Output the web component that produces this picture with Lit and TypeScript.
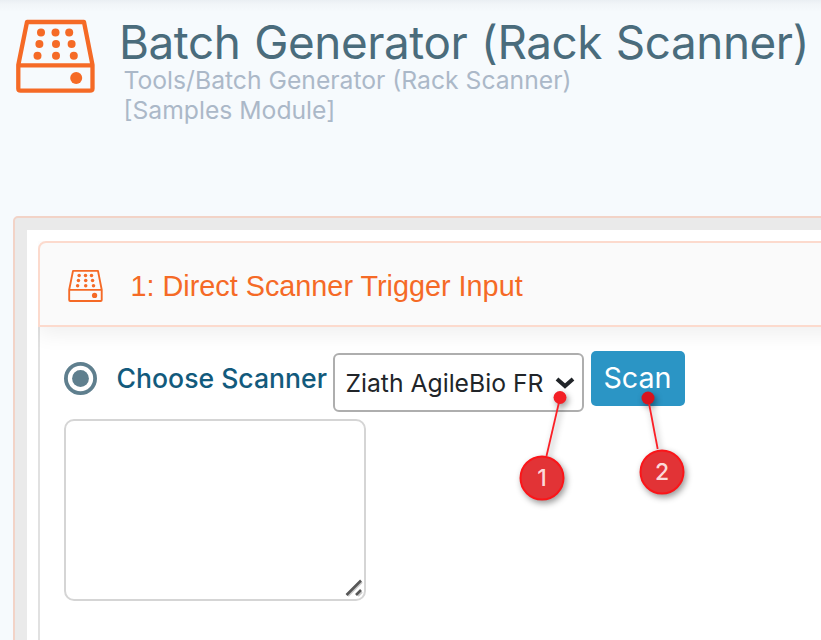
import { LitElement, html, css, svg } from "lit";
import { customElement } from "lit/decorators.js";

@customElement("rack-icon")
class RackIcon extends LitElement {
  static styles = css`
    :host { display: block; color: #f56a26; }
    svg { display: block; width: 100%; height: 100%; overflow: visible; }
  `;
  render() {
    const dots = [
      [25, 12.5], [39.5, 12.5], [53.2, 12.5],
      [23.4, 24], [40, 24], [55.6, 24],
      [21.5, 35.7], [40, 35.7], [57.8, 35.7],
    ];
    return html`<svg viewBox="0 0 79 73">
      <path d="M11 2H68L76.5 45V68.5Q76.5 70.7 74 70.7H4.6Q2.3 70.7 2.3 68.5V45Z"
        fill="none" stroke="currentColor" stroke-width="4.3" stroke-linejoin="round" />
      <path d="M2.3 45.3H76.5" stroke="currentColor" stroke-width="4.3" />
      ${dots.map(([x, y]) => svg`<circle cx=${x} cy=${y} r="4" fill="currentColor" />`)}
      <circle cx="60.2" cy="58" r="6" fill="currentColor" />
    </svg>`;
  }
}

@customElement("app-root")
class AppRoot extends LitElement {
  static styles = css`
    :host {
      display: block;
      position: relative;
      box-sizing: border-box;
      width: 821px;
      height: 640px;
      overflow: hidden;
      background: linear-gradient(#eaeff3 0, #f1f5f8 4px, #f6fafd 12px);
      font-family: Inter, sans-serif;
      white-space: nowrap;
    }
    .page-head { display: flex; height: 216px; padding-left: 16px; box-sizing: border-box; }
    .page-icon { width: 79px; height: 73px; margin-top: 20px; flex: none; }
    .titles { margin-left: 24px; padding-top: 20px; }
    h1 { margin: 0; font-size: 45.8px; line-height: 45px; font-weight: 400; letter-spacing: -0.42px; word-spacing: 1.4px; color: #4a6c7c; }
    .crumbs { margin-left: 4.5px; font-size: 24.7px; line-height: 30px; color: #abb8c8; }
    .frame {
      box-sizing: border-box;
      margin-left: 13px;
      width: 840px;
      height: 460px;
      padding: 12px 0 0 12px;
      border: 2px solid #f2d3c7;
      border-radius: 5px;
      background: #eaeaea;
    }
    .sheet { background: #fff; height: 446px; padding: 11px 0 0 11px; }
    .card-head {
      box-sizing: border-box;
      position: relative;
      display: flex;
      align-items: center;
      height: 86px;
      padding-left: 27.5px;
      border: 2px solid #fcdacd;
      border-radius: 8px 0 0 0;
      background: #fafafa;
      box-shadow: 0 6px 22px rgba(0, 0, 0, 0.07);
      clip-path: inset(0 0 -40px 0);
      font: 28.8px/32px "Liberation Sans", Arial, sans-serif;
      color: #f56a26;
    }
    .card-icon { width: 35px; height: 32px; margin-right: 28px; margin-top: 4px; }
    .card-title { padding-top: 3px; }
    .card-body { height: 340px; padding: 22px 0 0 24px; border-left: 2px solid #e1e1e1; }
    .row { display: flex; height: 68px; align-items: flex-start; }
    .radio { width: 33px; height: 33px; margin-top: 13px; flex: none; }
    .choose { width: 210px; margin-left: 19.5px; margin-top: 13px; font-size: 26.6px; line-height: 32px; font-weight: 500; color: #125a7c; }
    .select {
      box-sizing: border-box;
      display: flex;
      align-items: center;
      width: 251px;
      height: 59px;
      margin: 4px 0 0 6.5px;
      padding: 0 7px 0 10.5px;
      border: 2px solid #aeaeae;
      border-radius: 6px;
      font-size: 24.7px;
      color: #212529;
      background: #fff;
      justify-content: space-between;
    }
    .chevron { width: 20px; height: 13px; }
    .scan {
      box-sizing: border-box;
      width: 94px;
      height: 55px;
      margin: 2px 0 0 7px;
      padding: 0 1px 2px 0;
      border: 0;
      border-radius: 5px;
      background: #2b95c5;
      color: #fff;
      font: 28.7px/53px Inter, sans-serif;
      text-align: center;
    }
    .area {
      box-sizing: border-box;
      display: flex;
      justify-content: flex-end;
      align-items: flex-end;
      width: 302px;
      height: 182px;
      margin-top: 2px;
      padding: 0 1px 2px 0;
      border: 2px solid #d5d5d5;
      border-radius: 10px;
      background: #fff;
    }
    .grip { width: 18px; height: 18px; }
    .notes { position: absolute; left: 0; top: 0; width: 821px; height: 640px; pointer-events: none; }
    .shade { filter: drop-shadow(2px 3px 3px rgba(0, 0, 0, 0.4)); }
    .num { font: 500 23px Inter, sans-serif; fill: #fbdada; text-anchor: middle; }
  `;

  render() {
    return html`
      <header class="page-head">
        <rack-icon class="page-icon"></rack-icon>
        <div class="titles">
          <h1>Batch Generator (Rack Scanner)</h1>
          <div class="crumbs">Tools/Batch Generator (Rack Scanner)<br />[Samples Module]</div>
        </div>
      </header>
      <main class="frame">
        <div class="sheet">
          <div class="card-head">
            <rack-icon class="card-icon"></rack-icon>
            <span class="card-title">1: Direct Scanner Trigger Input</span>
          </div>
          <div class="card-body">
            <div class="row">
              <svg class="radio" viewBox="0 0 33 33">
                <circle cx="16.5" cy="16.5" r="14.6" fill="#fff" stroke="#5f7f8e" stroke-width="3.8" />
                <circle cx="16.5" cy="16.5" r="8.4" fill="#5f7f8e" />
              </svg>
              <label class="choose">Choose Scanner</label>
              <div class="select">
                <span>Ziath AgileBio FR</span>
                <svg class="chevron" viewBox="0 0 20 13">
                  <path d="M2 3L10 10L18 3" fill="none" stroke="#212529" stroke-width="4" />
                </svg>
              </div>
              <button class="scan">Scan</button>
            </div>
            <div class="area">
              <svg class="grip" viewBox="0 0 18 18">
                <path d="M3 17L17 3M13 17L17 13" stroke="#c9c9c9" stroke-width="2" />
                <path d="M1.5 16L16 1.5M11 16L16 11" stroke="#575757" stroke-width="2.6" />
              </svg>
            </div>
          </div>
        </div>
      </main>
      <svg class="notes" viewBox="0 0 821 640">
        <g class="shade">
          <path d="M560 398L546.5 456" stroke="#fb2027" stroke-width="1.8" />
          <circle cx="560" cy="397.5" r="6.5" fill="#f31f25" />
          <circle cx="542" cy="478" r="21.5" fill="#e23336" stroke="#fb1519" stroke-width="2" />
        </g>
        <g class="shade">
          <path d="M648 398L657.7 449" stroke="#fb2027" stroke-width="1.8" />
          <circle cx="648" cy="398" r="6.5" fill="#d7141d" />
          <circle cx="662" cy="472" r="21.5" fill="#e23336" stroke="#fb1519" stroke-width="2" />
        </g>
        <text class="num" x="542" y="486">1</text>
        <text class="num" x="662" y="480">2</text>
      </svg>
    `;
  }
}
